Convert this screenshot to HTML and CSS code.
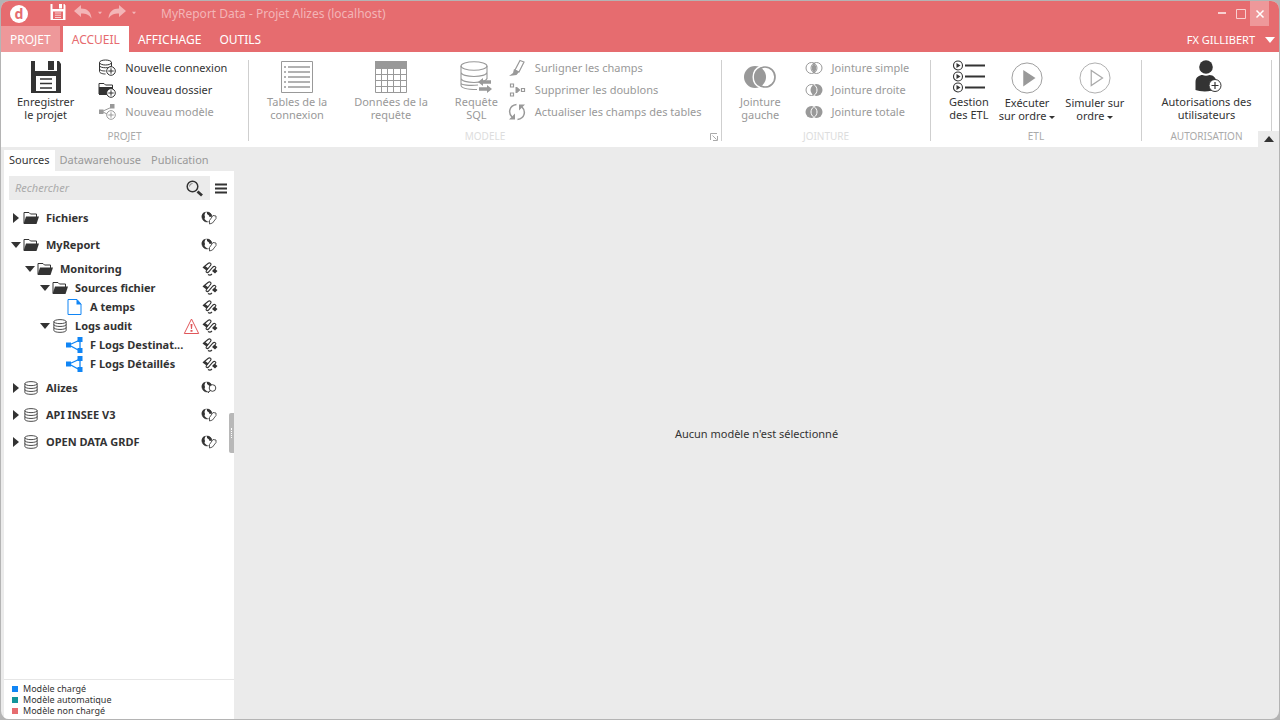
FILE: index.html
```html
<!DOCTYPE html>
<html lang="fr">
<head>
<meta charset="utf-8">
<title>MyReport Data - Projet Alizes (localhost)</title>
<link rel="stylesheet" href="styles.css">
</head>
<body>
<svg class="defs" aria-hidden="true">
  <symbol id="save" viewBox="0 0 32 34"><path fill="currentColor" fill-rule="evenodd" d="M1 1h4v10h22V1h2l2 3v29H1zM6 16v15h20V16z"/><path fill="currentColor" d="M18 1h6v9h-6z"/><path stroke="currentColor" stroke-width="1.400" d="M10 19h12M10 23.500h12M10 28h12"/></symbol>
  <symbol id="undo" viewBox="0 0 18 14"><path fill="currentColor" d="M0 6 7 0v3.500c6 0 10 3 10.500 10C15 9.500 12 8.500 7 8.500V12z"/></symbol>
  <symbol id="plus" viewBox="0 0 10 10"><circle cx="5" cy="5" r="4.300" fill="#fff" stroke="currentColor"/><path stroke="currentColor" d="M5 2.300v5.400M2.300 5h5.400"/></symbol>
  <symbol id="db" viewBox="0 0 16 16"><g fill="none" stroke="currentColor"><ellipse cx="8" cy="3" rx="7" ry="2.300"/><path d="M1 3v10c0 3 14 3 14 0V3M1 6.300c0 3 14 3 14 0M1 9.700c0 3 14 3 14 0"/></g></symbol>
  <symbol id="dbadd" viewBox="0 0 18 18"><g fill="none" stroke="currentColor"><ellipse cx="7.500" cy="3.500" rx="6" ry="2.500"/><path d="M1.500 3.500v9c0 1.500 3 2.500 6 2.500M13.500 3.500v4M1.500 6.500c0 3 12 3 12 0M1.500 9.500c0 2 3 2.500 6 2.500"/></g><use href="#plus" x="8" y="7" width="10" height="10"/></symbol>
  <symbol id="folder" viewBox="0 0 16 14"><path fill="none" stroke="currentColor" d="M1 12V1.500h5L7.500 3h6v3"/><path fill="currentColor" d="M3 5.500h13L13.500 13H.5z"/></symbol>
  <symbol id="folderadd" viewBox="0 0 18 18"><path fill="none" stroke="currentColor" d="M1 13V2.500h5L7.500 4h7v3"/><path fill="currentColor" d="M1 6h14v8H1z"/><use href="#plus" x="8" y="7" width="10" height="10"/></symbol>
  <symbol id="share" viewBox="0 0 17 16"><path fill="none" stroke="currentColor" stroke-width="1.300" d="M3 8l11-5v11z"/><path fill="currentColor" d="M0 5.500h5v5H0zM11.500 0h5v5h-5zM11.500 11h5v5h-5z"/></symbol>
  <symbol id="shareadd" viewBox="0 0 18 18"><path fill="none" stroke="currentColor" d="M14 4 4 8.500l8 4"/><path fill="currentColor" d="M1 6.500h4.500V11H1zM12 1h4.500v4.500H12z"/><use href="#plus" x="8" y="7" width="10" height="10"/></symbol>
  <symbol id="list" viewBox="0 0 32 32"><path fill="none" stroke="currentColor" d="M.5.5h31v31H.5z"/><path stroke="currentColor" stroke-width="1.700" d="M7 6h22M7 11h22M7 16h22M7 21h22M7 26h22"/><path stroke="currentColor" stroke-width="1.700" d="M3 6h2M3 11h2M3 16h2M3 21h2M3 26h2"/></symbol>
  <symbol id="table" viewBox="0 0 32 32"><path fill="currentColor" d="M0 0h32v8H0z"/><path fill="none" stroke="currentColor" d="M.5.5h31v31H.5zM6.500 8v24M12.500 8v24M18.500 8v24M25.500 8v24M0 13.500h32M0 19.500h32M0 25.500h32"/></symbol>
  <symbol id="sql" viewBox="0 0 32 32"><g fill="none" stroke="currentColor" stroke-width="1.100"><ellipse cx="14" cy="5" rx="13" ry="4.300"/><path d="M1 5v19c0 3 6 4.500 16 4.500M27 5v13M1 11c0 6 26 6 26 0M1 17c0 6 26 6 26 0M1 22c0 2 9 3 17 2"/></g><path fill="currentColor" d="m18 21 5-4v2.200h8v3.600h-8V25zM32 28l-5-4v2.200h-8v3.600h8V32z"/></symbol>
  <symbol id="pen" viewBox="0 0 18 18"><path fill="none" stroke="currentColor" stroke-width="1.200" d="m12 1.500 4 1.500-5 10-4-2z"/><path fill="currentColor" d="m6 10 5 3-2.500 3L1 17l4-3z"/></symbol>
  <symbol id="dup" viewBox="0 0 18 18"><path fill="none" stroke="currentColor" stroke-width="1.200" d="M2.500 3h3v3h-3zM2.500 12h3v3h-3zM13.500 7.500h3v3h-3z"/><path fill="currentColor" d="M7.500 6H9v6H7.500zM9 6l3.500 3L9 12z"/></symbol>
  <symbol id="refresh" viewBox="0 0 18 18"><path fill="none" stroke="currentColor" stroke-width="1.500" d="M4 14C0 10 1 2.500 8.500 1.500M14 4c4 4 3 11.500-4.500 12.500"/><path fill="currentColor" d="M1 16.500h6v-6zM17 1.500h-6v6z"/></symbol>
  <symbol id="jleft" viewBox="0 0 32 24"><circle cx="21" cy="12" r="10" fill="#fff" stroke="currentColor" stroke-width="1.700"/><circle cx="11" cy="12" r="11" fill="currentColor"/><path fill="none" stroke="#fff" stroke-width="1.400" d="M16 1.500a11.500 11.500 0 0 0 0 21"/></symbol>
  <symbol id="jin" viewBox="0 0 18 14"><g fill="none" stroke="currentColor"><circle cx="6.500" cy="7" r="5.500"/><circle cx="11.500" cy="7" r="5.500"/></g><path fill="currentColor" d="M9 2.500c3 2 3 7 0 9-3-2-3-7 0-9"/></symbol>
  <symbol id="jright" viewBox="0 0 18 14"><circle cx="6.500" cy="7" r="5.500" fill="none" stroke="currentColor"/><circle cx="11.500" cy="7" r="6" fill="currentColor"/><path fill="none" stroke="#fff" d="M9 1.500c4 3 4 8 0 11"/></symbol>
  <symbol id="jfull" viewBox="0 0 18 14"><g fill="currentColor"><circle cx="6.500" cy="7" r="6"/><circle cx="11.500" cy="7" r="6"/></g><path fill="none" stroke="#fff" d="M9 1.500c4 3 4 8 0 11M9 1.500c-4 3-4 8 0 11"/></symbol>
  <symbol id="etlrow" viewBox="0 0 32 11"><circle cx="5" cy="5.500" r="4.500" fill="none" stroke="currentColor" stroke-width="1.100"/><path fill="currentColor" d="m3.500 3 4 2.500-4 2.500zM12 4.500h20v2H12z"/></symbol>
  <symbol id="etl" viewBox="0 0 32 34"><use href="#etlrow" width="32" height="11"/><use href="#etlrow" y="11" width="32" height="11"/><use href="#etlrow" y="22" width="32" height="11"/></symbol>
  <symbol id="play" viewBox="0 0 34 34"><circle cx="17" cy="17" r="16" fill="none" stroke="#999"/><path fill="#999" d="m13 8.500 13 8.500-13 9z"/></symbol>
  <symbol id="simulate" viewBox="0 0 34 34"><circle cx="17" cy="17" r="16" fill="none" stroke="#aaa"/><path fill="none" stroke="#aaa" stroke-width="1.300" d="M13 9v16l12-8z"/></symbol>
  <symbol id="user" viewBox="0 0 32 34"><circle cx="15" cy="7" r="6.800" fill="currentColor"/><path fill="currentColor" d="M4.500 30V22c0-5 4-7 7-7 2 1 5 1 7 0 4 0 7 3 7 8v6c-5 3-16 3-21 1"/><g transform="translate(17 18)"><circle cx="7" cy="7.500" r="6" fill="#fff" stroke="currentColor"/><path stroke="currentColor" stroke-width="1.200" d="M7 4v7M3.500 7.500h7"/></g></symbol>
  <symbol id="search" viewBox="0 0 17 17"><circle cx="6.500" cy="6.500" r="5.300" fill="none" stroke="currentColor" stroke-width="1.500"/><path stroke="currentColor" stroke-width="2.800" d="m11.500 11.500 4.500 4"/><path fill="none" stroke="currentColor" stroke-width=".6" d="M3.500 6.500a3 3 0 0 1 3-3"/></symbol>
  <symbol id="globe" viewBox="0 0 16 14"><circle cx="6" cy="6" r="5" fill="none" stroke="currentColor" stroke-width=".5"/><path fill="currentColor" d="M4.500 1C2 1 0 4 1 7c1 3 3 4.500 6 4L5 9.500 3.500 8 4 6 3.500 4zM6 1c3 0 5 2 5 4.500L8.500 6 8 4.500 6 3z"/></symbol>
  <symbol id="webedit" viewBox="0 0 16 14"><use href="#globe" width="16" height="14"/><path fill="#fff" stroke="currentColor" stroke-width=".8" d="m8.500 9.500 3.500-5 3 .5v2.500L11.500 12 8.500 13z"/></symbol>
  <symbol id="webfind" viewBox="0 0 16 14"><use href="#globe" width="16" height="14"/><circle cx="11.500" cy="7" r="3.300" fill="#fff" stroke="currentColor" stroke-width=".9"/><path stroke="currentColor" d="m9 9.500-2 2.500"/></symbol>
  <symbol id="plug" viewBox="0 0 16 14"><g fill="none" stroke="currentColor" stroke-width="1.100"><path d="M3 4 6 1.500C8 0 10 2 8.500 3.500L4.500 8.500C3.500 10 5 11.500 6.500 10L11 5c1.500-1.500 3.500 0 2.500 1.500L12 8.500M6 12.500c1.500 1 3 .5 4-.5"/></g><path fill="currentColor" d="m.5 5.500 2-2 4 3-2 2zM10 9l2.500-2.500 3 2.500-2.500 2.500z"/></symbol>
  <symbol id="file" viewBox="0 0 16 16"><path fill="#fff" stroke="currentColor" d="M1.500.5h9l4 4.500v10.500h-13z"/><path fill="currentColor" d="M10 0v5.500h5z"/></symbol>
  <symbol id="warn" viewBox="0 0 16 16"><path fill="none" stroke="#e0565a" d="M8 1 .8 15.500h14.400z"/><path fill="#e0565a" d="M7 6h2l-.5 5h-1zM7 12h2v1.700H7z"/></symbol>
  <symbol id="right" viewBox="0 0 10 10"><path fill="currentColor" d="M2 0v10l6-5z"/></symbol>
  <symbol id="down" viewBox="0 0 10 10"><path fill="currentColor" d="M0 2h10L5 8z"/></symbol>
</svg>
<div class="window">
  <header class="chrome">
    <div class="titlebar">
      <span class="logo">d</span>
      <button class="quick save" aria-label="Enregistrer"><svg><use href="#save"/></svg></button>
      <button class="quick" aria-label="Annuler"><svg><use href="#undo"/></svg></button>
      <button class="mini" aria-label="Historique d'annulation"><svg><use href="#down"/></svg></button>
      <button class="quick redo" aria-label="Rétablir"><svg><use href="#undo"/></svg></button>
      <button class="mini" aria-label="Historique de rétablissement"><svg><use href="#down"/></svg></button>
      <span class="title">MyReport Data - Projet Alizes (localhost)</span>
      <div class="controls">
        <button aria-label="Réduire"><svg viewBox="0 0 10 10"><path stroke="currentColor" stroke-width="2" d="M1 4h8"/></svg></button>
        <button aria-label="Agrandir"><svg viewBox="0 0 10 10"><path fill="none" stroke="currentColor" d="M.5.5h9v9h-9z"/></svg></button>
        <button class="close" aria-label="Fermer"><svg viewBox="0 0 10 10"><path stroke="currentColor" stroke-width="1.500" d="m1.500 1.500 7 7M8.500 1.500l-7 7"/></svg></button>
      </div>
    </div>
    <nav class="tabs">
      <button class="file">PROJET</button>
      <button class="active">ACCUEIL</button>
      <button>AFFICHAGE</button>
      <button>OUTILS</button>
      <button class="account">FX GILLIBERT <svg><use href="#down"/></svg></button>
    </nav>
  </header>

  <section class="ribbon">
    <div class="group project">
      <div class="tools">
        <button class="big"><svg><use href="#save"/></svg><span>Enregistrer<br>le projet</span></button>
        <div class="stack">
          <button><svg><use href="#dbadd"/></svg>Nouvelle connexion</button>
          <button><svg><use href="#folderadd"/></svg>Nouveau dossier</button>
          <button disabled><svg><use href="#shareadd"/></svg>Nouveau modèle</button>
        </div>
      </div>
      <h2>PROJET</h2>
    </div>
    <div class="group model">
      <div class="tools">
        <div class="bigs">
          <button class="big" disabled><svg><use href="#list"/></svg><span>Tables de la<br>connexion</span></button>
          <button class="big" disabled><svg><use href="#table"/></svg><span>Données de la<br>requête</span></button>
          <button class="big" disabled><svg><use href="#sql"/></svg><span>Requête<br>SQL</span></button>
        </div>
        <div class="stack">
          <button disabled><svg><use href="#pen"/></svg>Surligner les champs</button>
          <button disabled><svg><use href="#dup"/></svg>Supprimer les doublons</button>
          <button disabled><svg><use href="#refresh"/></svg>Actualiser les champs des tables</button>
        </div>
      </div>
      <h2 class="off">MODELE</h2>
      <button class="launcher" aria-label="Options du modèle"><svg viewBox="0 0 8 8"><path fill="none" stroke="currentColor" d="M.5 7V.5H7M2.500 2.500l4 4M7.500 3v4.500H3"/></svg></button>
    </div>
    <div class="group join">
      <div class="tools">
        <button class="big" disabled><svg><use href="#jleft"/></svg><span>Jointure<br>gauche</span></button>
        <div class="stack">
          <button disabled><svg><use href="#jin"/></svg>Jointure simple</button>
          <button disabled><svg><use href="#jright"/></svg>Jointure droite</button>
          <button disabled><svg><use href="#jfull"/></svg>Jointure totale</button>
        </div>
      </div>
      <h2 class="off">JOINTURE</h2>
    </div>
    <div class="group etl">
      <div class="tools">
        <button class="big"><svg><use href="#etl"/></svg><span>Gestion<br>des ETL</span></button>
        <button class="big round"><svg><use href="#play"/></svg><span>Exécuter<br>sur ordre <i class="caret"></i></span></button>
        <button class="big round"><svg><use href="#simulate"/></svg><span>Simuler sur<br>ordre <i class="caret"></i></span></button>
      </div>
      <h2>ETL</h2>
    </div>
    <div class="group rights">
      <div class="tools">
        <button class="big"><svg><use href="#user"/></svg><span>Autorisations des<br>utilisateurs</span></button>
      </div>
      <h2>AUTORISATION</h2>
    </div>
    <button class="collapse" aria-label="Réduire le ruban"><svg viewBox="0 0 10 6"><path fill="currentColor" d="M0 6h10L5 0z"/></svg></button>
  </section>

  <div class="body">
    <aside class="side">
      <nav class="sidetabs">
        <button class="active">Sources</button>
        <button>Datawarehouse</button>
        <button>Publication</button>
      </nav>
      <div class="panel">
        <div class="filter">
          <label class="search"><input type="text" placeholder="Rechercher" aria-label="Rechercher"><svg><use href="#search"/></svg></label>
          <button class="menu" aria-label="Menu"><svg viewBox="0 0 12 11"><path stroke="currentColor" stroke-width="2" d="M0 1.500h12M0 5.500h12M0 9.500h12"/></svg></button>
        </div>
        <ul class="tree">
          <li>
            <div class="row root"><button aria-label="Déplier Fichiers"><svg><use href="#right"/></svg></button><svg><use href="#folder"/></svg><span>Fichiers</span><svg><use href="#webedit"/></svg></div>
          </li>
          <li>
            <div class="row root"><button aria-label="Replier MyReport"><svg><use href="#down"/></svg></button><svg><use href="#folder"/></svg><span>MyReport</span><svg><use href="#webedit"/></svg></div>
            <ul class="branch">
              <li>
                <div class="row l1"><button aria-label="Replier Monitoring"><svg><use href="#down"/></svg></button><svg><use href="#folder"/></svg><span>Monitoring</span><svg><use href="#plug"/></svg></div>
                <ul>
                  <li>
                    <div class="row l2"><button aria-label="Replier Sources fichier"><svg><use href="#down"/></svg></button><svg><use href="#folder"/></svg><span>Sources fichier</span><svg><use href="#plug"/></svg></div>
                    <ul><li><div class="row l3"><svg class="blue"><use href="#file"/></svg><span>A temps</span><svg><use href="#plug"/></svg></div></li></ul>
                  </li>
                  <li>
                    <div class="row l2"><button aria-label="Replier Logs audit"><svg><use href="#down"/></svg></button><svg><use href="#db"/></svg><span>Logs audit</span><svg class="alert"><use href="#warn"/></svg><svg><use href="#plug"/></svg></div>
                    <ul>
                      <li><div class="row l3"><svg class="blue"><use href="#share"/></svg><span>F Logs Destinat...</span><svg><use href="#plug"/></svg></div></li>
                      <li><div class="row l3"><svg class="blue"><use href="#share"/></svg><span>F Logs Détaillés</span><svg><use href="#plug"/></svg></div></li>
                    </ul>
                  </li>
                </ul>
              </li>
            </ul>
          </li>
          <li><div class="row root"><button aria-label="Déplier Alizes"><svg><use href="#right"/></svg></button><svg><use href="#db"/></svg><span>Alizes</span><svg><use href="#webfind"/></svg></div></li>
          <li><div class="row root"><button aria-label="Déplier API INSEE V3"><svg><use href="#right"/></svg></button><svg><use href="#db"/></svg><span>API INSEE V3</span><svg><use href="#webedit"/></svg></div></li>
          <li><div class="row root"><button aria-label="Déplier OPEN DATA GRDF"><svg><use href="#right"/></svg></button><svg><use href="#db"/></svg><span>OPEN DATA GRDF</span><svg><use href="#webedit"/></svg></div></li>
        </ul>
        <ul class="legend">
          <li class="loaded">Modèle chargé</li>
          <li class="auto">Modèle automatique</li>
          <li class="unloaded">Modèle non chargé</li>
        </ul>
      </div>
      <div class="grip"></div>
    </aside>
    <main class="content">Aucun modèle n'est sélectionné</main>
  </div>
</div>
</body>
</html>
```
FILE: styles.css
```css
* { box-sizing: border-box; }
body {
  margin: 0;
  height: 100vh;
  padding: 1px;
  background: #b4b4b4;
  color: #333;
  font: 11px/16px "Noto Sans", "Open Sans", sans-serif;
}
button {
  margin: 0;
  padding: 0;
  border: 0;
  background: none;
  color: inherit;
  font: inherit;
  white-space: nowrap;
}
ul { margin: 0; padding: 0; list-style: none; }
svg { display: block; flex: none; }
.defs { position: absolute; width: 0; height: 0; }

.window {
  display: flex;
  flex-direction: column;
  height: 100%;
  overflow: hidden;
  border-radius: 8px;
  background: #ebebeb;
}

/* title bar and tabs */
.chrome { background: #e66c6f; color: #fff; }
.titlebar { display: flex; align-items: center; height: 25px; padding-left: 9px; color: #f3b5b7; }
.logo {
  width: 18px;
  height: 18px;
  margin-right: 22px;
  border-radius: 50%;
  background: #fff;
  color: #e66c6f;
  font-size: 14px;
  font-weight: 700;
  line-height: 17px;
  text-align: center;
}
.quick { padding-bottom: 4px; }
.quick svg { width: 18px; height: 14px; }
.quick.save { margin-right: 8px; color: #fff; }
.quick.save svg { width: 16px; height: 18px; }
.quick.redo svg { transform: scaleX(-1); }
.mini { margin: 0 6px; padding-bottom: 2px; }
.mini svg { width: 4px; height: 4px; }
.title { margin-left: 19px; font-size: 12px; }
.controls { display: flex; align-self: stretch; margin-left: auto; padding-right: 10px; color: #f8d0d1; }
.controls button { display: grid; place-items: center; width: 19px; }
.controls svg { width: 10px; height: 10px; }
.controls .close { background: #ee989a; color: #fff; }

.tabs { display: flex; height: 26px; font-size: 12px; }
.tabs button { padding: 2px 9px 0; }
.tabs .file { margin-right: 3px; background: #ee989a; }
.tabs .active { background: #fff; color: #e66c6f; }
.tabs .account { display: flex; align-items: center; gap: 10px; margin-left: auto; padding: 2px 4px 0 0; font-size: 11px; }
.account svg { width: 10px; height: 10px; }

/* ribbon */
.ribbon { position: relative; display: flex; height: 95px; padding: 8px 0 6px; background: #fff; }
.group {
  position: relative;
  display: flex;
  flex: none;
  flex-direction: column;
  justify-content: space-between;
  border-right: 1px solid #cfcfcf;
}
.project { width: 248px; }
.model { width: 473px; }
.join { width: 209px; }
.etl { width: 211px; }
.rights { width: 130px; }
.group h2 {
  margin: 0;
  color: #aaa;
  font-size: 10px;
  font-weight: 400;
  line-height: 10px;
  text-align: center;
}
.group h2.off { color: #ddd; }
.tools, .bigs { display: flex; align-items: flex-start; }
.tools { padding-left: 18px; }
.project .tools { gap: 24px; padding-left: 16px; }
.model .tools { gap: 10px; }
.bigs { gap: 27px; }
.join .tools { gap: 24px; }
.etl .tools { gap: 10px; }
.rights .tools { justify-content: center; padding-left: 0; }
.big { display: flex; flex-direction: column; align-items: center; line-height: 13px; }
.big > svg { width: 32px; height: 34px; margin-bottom: 1px; }
.round > svg { height: 36px; margin-bottom: 0; }
.stack { display: flex; flex-direction: column; gap: 6px; }
.stack button { display: flex; align-items: center; gap: 9px; height: 16px; text-align: left; }
.stack svg { width: 18px; height: 18px; }
.join .stack svg { height: 14px; }
button:disabled { color: #999; }
.caret {
  display: inline-block;
  border: 3px solid transparent;
  border-top-color: currentColor;
  border-bottom: 0;
  vertical-align: middle;
}
.launcher { position: absolute; right: 3px; bottom: 0; color: #aaa; }
.launcher svg { width: 8px; height: 8px; }
.collapse {
  position: absolute;
  right: 0;
  bottom: 0;
  display: grid;
  place-items: center;
  width: 21px;
  height: 16px;
  background: #ebebeb;
}
.collapse svg { width: 10px; height: 6px; }

/* side panel */
.body { display: flex; flex: 1; min-height: 0; }
.side { position: relative; display: flex; flex-direction: column; width: 233px; padding: 3px 0 0 3px; }
.sidetabs { display: flex; height: 21px; color: #999; }
.sidetabs button { padding: 0 5px 2px; }
.sidetabs .active { background: #fff; color: #333; }
.panel { display: flex; flex: 1; flex-direction: column; min-height: 0; background: #fff; }
.filter { display: flex; gap: 5px; padding: 5px 5px 4px; }
.search { display: flex; align-items: center; width: 201px; height: 24px; padding: 0 7px 0 6px; background: #ebebeb; }
.search input { flex: 1; min-width: 0; padding: 0; border: 0; outline: 0; background: none; color: #333; font: inherit; }
.search input::placeholder { color: #aaa; font-style: italic; opacity: 1; }
.search svg { width: 17px; height: 17px; }
.menu svg { width: 12px; height: 11px; }
.tree { flex: 1; font-weight: 700; }
.branch { padding: 1px 0; }
.row { display: flex; align-items: center; height: 19px; padding-right: 16px; }
.row svg { width: 16px; height: 14px; }
.row button { margin-right: 2px; }
.row button svg { width: 10px; height: 10px; }
.row span { flex: 1; padding-left: 7px; white-space: nowrap; }
.row .blue, .row .alert { width: 17px; height: 16px; }
.blue { color: #1085f5; }
.root { height: 27px; padding-right: 17px; padding-left: 7px; }
.l1 { padding-left: 21px; }
.l2 { padding-left: 36px; }
.row svg + svg { margin-left: 2px; }
.l3 { padding-left: 62px; }
.legend { padding: 3px 8px; border-top: 1px solid #e6e6e6; font-size: 9px; line-height: 11px; }
.legend li { display: flex; align-items: center; gap: 5px; }
.legend li::before { content: ""; width: 6px; height: 6px; background: currentColor; }
.legend .loaded::before { background: #1085f5; }
.legend .auto::before { background: #12959b; }
.legend .unloaded::before { background: #e66c6f; }
.grip {
  position: absolute;
  right: 0;
  top: 266px;
  display: grid;
  place-items: center;
  width: 5px;
  height: 40px;
  border-radius: 2px 0 0 2px;
  background: #b8b8b8;
}
.grip::before { content: ""; height: 10px; border-left: 1px dotted #fff; }

.content { display: grid; flex: 1; place-items: center; padding-top: 2px; }
```
